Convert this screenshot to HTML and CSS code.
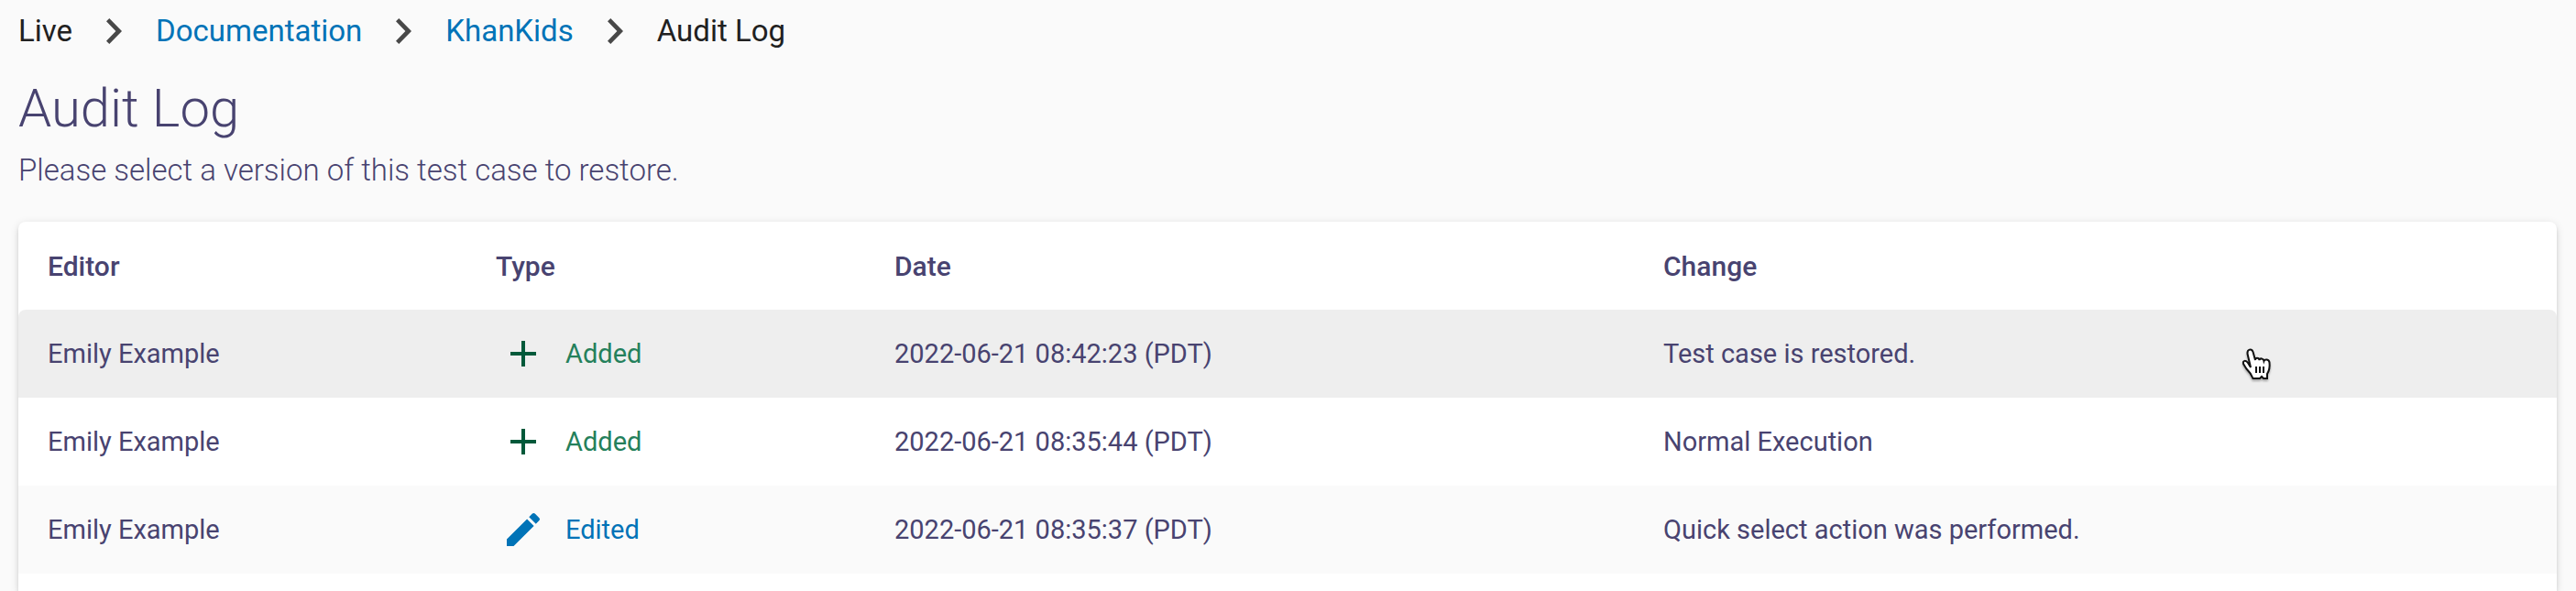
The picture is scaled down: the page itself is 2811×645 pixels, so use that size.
FILE: index.html
```
<!DOCTYPE html>
<html lang="en">
<head>
    <meta charset="UTF-8">
    <meta name="viewport" content="width=device-width, initial-scale=1.0">
    <title>Audit Log</title>
    <link rel="stylesheet" href="styles.css">
</head>
<body>
    <nav class="breadcrumbs" aria-label="Breadcrumb">
        <span>Live</span>
        <svg class="chevron" viewBox="0 0 17 28"><path d="M0 3.3 3.3 0 17 14 3.3 28 0 24.7 10.4 14z"/></svg>
        <a href="#">Documentation</a>
        <svg class="chevron" viewBox="0 0 17 28"><path d="M0 3.3 3.3 0 17 14 3.3 28 0 24.7 10.4 14z"/></svg>
        <a href="#">KhanKids</a>
        <svg class="chevron" viewBox="0 0 17 28"><path d="M0 3.3 3.3 0 17 14 3.3 28 0 24.7 10.4 14z"/></svg>
        <span>Audit Log</span>
    </nav>
    <h1>Audit Log</h1>
    <p class="subtitle">Please select a version of this test case to restore.</p>
    <div class="card">
        <table>
            <colgroup>
                <col class="col-editor">
                <col class="col-type">
                <col class="col-date">
                <col>
            </colgroup>
            <thead>
                <tr>
                    <th>Editor</th>
                    <th>Type</th>
                    <th>Date</th>
                    <th>Change</th>
                </tr>
            </thead>
            <tbody>
                <tr class="active">
                    <td>Emily Example</td>
                    <td>
                        <div class="type added">
                            <svg viewBox="0 0 24 24"><path d="M19 13h-6v6h-2v-6H5v-2h6V5h2v6h6z"/></svg>
                            <span>Added</span>
                        </div>
                    </td>
                    <td>2022-06-21 08:42:23 (PDT)</td>
                    <td>Test case is restored.</td>
                </tr>
                <tr>
                    <td>Emily Example</td>
                    <td>
                        <div class="type added">
                            <svg viewBox="0 0 24 24"><path d="M19 13h-6v6h-2v-6H5v-2h6V5h2v6h6z"/></svg>
                            <span>Added</span>
                        </div>
                    </td>
                    <td>2022-06-21 08:35:44 (PDT)</td>
                    <td>Normal Execution</td>
                </tr>
                <tr class="striped">
                    <td>Emily Example</td>
                    <td>
                        <div class="type edited">
                            <svg viewBox="0 0 24 24"><path d="M3 17.25V21h3.75L17.81 9.94l-3.75-3.75zM20.71 7.04a1 1 0 0 0 0-1.41l-2.34-2.34a1 1 0 0 0-1.41 0l-1.83 1.83 3.75 3.75z"/></svg>
                            <span>Edited</span>
                        </div>
                    </td>
                    <td>2022-06-21 08:35:37 (PDT)</td>
                    <td>Quick select action was performed.</td>
                </tr>
            </tbody>
        </table>
    </div>
    <svg class="pointer" viewBox="0 0 46 46"><path d="M16 27 12.500 12C12 7 17 6 18.500 10L21 19C21 16 25 16 25.500 19 26 16.500 30 17 30.500 20 31.500 17.500 36 18 36.500 21.500 37 26 36 31 34 34V39H30L28 37 26 39H18.500C17 35 14 31 11 28L8 23C7 19 11 19 13 22z"/><path class="lines" d="M22 26v7M26 26v7M30 26v7"/></svg>
</body>
</html>
```

FILE: styles.css
```
* {
    box-sizing: border-box;
}
body {
    display: flex;
    flex-direction: column;
    height: 100vh;
    margin: 0;
    padding: 10px 21px 0 20px;
    overflow: hidden;
    background-color: #FAFAFA;
    color: #484370;
    font-family: Roboto, sans-serif;
    font-size: 29px;
}
.breadcrumbs {
    display: flex;
    align-items: center;
    gap: 37px;
    font-size: 33px;
    line-height: 48px;
    color: #212121;
}
.breadcrumbs a {
    color: #0073B7;
    text-decoration: none;
}
.chevron {
    width: 17px;
    height: 28px;
    fill: #484848;
}
h1 {
    margin: 26px 0 0;
    font-size: 58px;
    font-weight: 300;
    line-height: 68px;
}
.subtitle {
    margin: 10px 0 32px;
    font-size: 33px;
    font-weight: 300;
    line-height: 48px;
}
.card {
    flex: 1;
    border-radius: 8px 8px 0 0;
    background-color: #FFF;
    box-shadow: 0 6px 2px -4px rgba(0, 0, 0, 0.1), 0 4px 4px rgba(0, 0, 0, 0.1), 0 2px 10px rgba(0, 0, 0, 0.12);
}
table {
    width: 100%;
    table-layout: fixed;
    border-collapse: separate;
    border-spacing: 0;
}
.col-editor {
    width: 489px;
}
.col-type {
    width: 435px;
}
.col-date {
    width: 839px;
}
th, td {
    height: 96px;
    padding: 0 32px;
    text-align: left;
    vertical-align: middle;
}
th {
    font-size: 30px;
    font-weight: 500;
}
.active td {
    background-color: #EEE;
}
.active td:first-child {
    border-top-left-radius: 8px;
}
.active td:last-child {
    border-top-right-radius: 8px;
}
.striped td {
    background-color: #FAFAFA;
}
.type {
    display: flex;
    align-items: center;
    gap: 22px;
    padding-left: 6px;
}
.type svg {
    width: 48px;
    height: 48px;
    fill: currentColor;
}
.added {
    color: #24805B;
}
.added svg {
    fill: #00593A;
}
.edited {
    color: #0073B7;
}
.pointer {
    position: absolute;
    top: 374px;
    right: 325px;
    width: 46px;
    height: 46px;
    fill: #FFF;
    stroke: #111;
    stroke-width: 2;
    filter: drop-shadow(0 2px 1px rgba(0, 0, 0, 0.3));
}
.pointer .lines {
    fill: none;
}
```
